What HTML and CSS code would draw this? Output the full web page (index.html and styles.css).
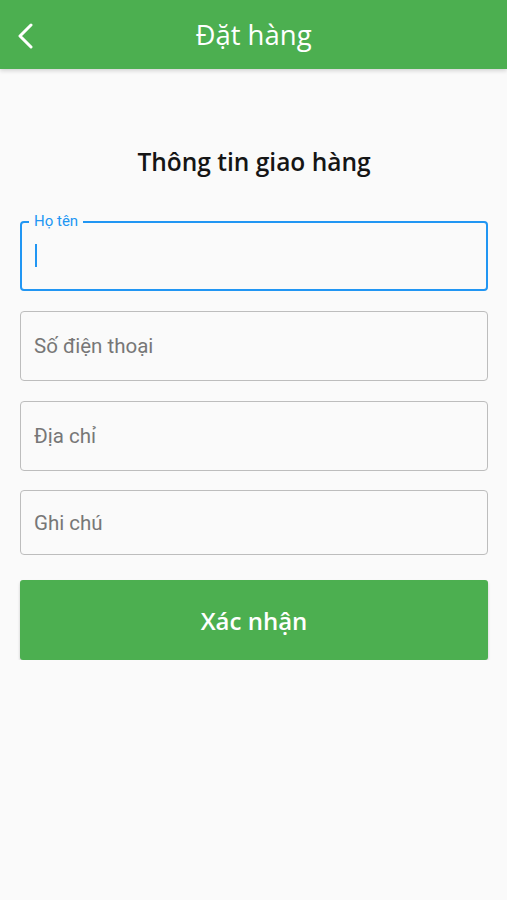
FILE: index.html
```html
<!DOCTYPE html>
<html lang="vi">
<head>
    <meta charset="UTF-8">
    <meta name="viewport" content="width=device-width, initial-scale=1.0">
    <title>Đặt hàng</title>
    <link rel="stylesheet" href="styles.css">
</head>
<body>
    <div class="app-bar">
        <button class="back-btn" aria-label="Quay lại">
            <svg width="18" height="26" viewBox="0 0 18 26">
                <polyline points="14,2 3,13 14,24" fill="none" stroke="#fff" stroke-width="3" stroke-linecap="round" stroke-linejoin="round"/>
            </svg>
        </button>
        <h1 class="app-title">Đặt hàng</h1>
    </div>

    <div class="container">
        <h2 class="heading">Thông tin giao hàng</h2>

        <form class="order-form">
            <!-- focused field -->
            <div class="field field-active">
                <span class="field-label">Họ tên</span>
                <span class="caret"></span>
            </div>
            <input class="field" type="tel" placeholder="Số điện thoại">
            <input class="field" type="text" placeholder="Địa chỉ">
            <input class="field field-note" type="text" placeholder="Ghi chú">
            <button type="button" class="submit-btn">Xác nhận</button>
        </form>
    </div>
</body>
</html>
```

FILE: styles.css
```css
body {
    font-family: 'Open Sans', 'Noto Sans', sans-serif;
    margin: 0;
    padding: 0;
    background-color: #fafafa;
    color: #111;
}
.app-bar {
    height: 69px;
    background-color: #4caf50;
    display: flex;
    align-items: center;
    justify-content: center;
    position: relative;
    box-shadow: 0 2px 4px rgba(0, 0, 0, 0.15);
}
.back-btn {
    position: absolute;
    left: 17px;
    top: 23px;
    background: none;
    border: none;
    padding: 0;
    cursor: pointer;
}
.app-title {
    margin: 0;
    color: #fff;
    font-weight: 400;
    font-size: 27.5px;
    line-height: 32px;
}
.container {
    padding: 0 19px 0 20px;
}
.heading {
    margin: 78px 0 44px;
    text-align: center;
    font-size: 24.5px;
    line-height: 30px;
    font-weight: 600;
    color: #151515;
}
.order-form {
    display: flex;
    flex-direction: column;
    gap: 20px;
}
.field {
    box-sizing: border-box;
    height: 70px;
    width: 100%;
    border: 1.5px solid #bdbdbd;
    border-radius: 4px;
    background: transparent;
    padding: 0 12px 0 13px;
    font-family: Roboto, 'Noto Sans', sans-serif;
    font-size: 20.5px;
    color: #333;
    outline: none;
}
.field::placeholder {
    color: #777;
}
.field-note {
    height: 65px;
    margin-top: -1px;
}
.field-active {
    position: relative;
    border: 2px solid #2196f3;
    display: flex;
    align-items: center;
}
.field-label {
    position: absolute;
    top: -10px;
    left: 7px;
    padding: 0 5px;
    background-color: #fafafa;
    color: #2196f3;
    font-family: Roboto, 'Noto Sans', sans-serif;
    font-size: 15px;
    line-height: 16px;
}
.caret {
    width: 2px;
    height: 23px;
    background-color: #2196f3;
    margin-top: -2px;
}
.submit-btn {
    margin-top: 5px;
    height: 80px;
    border: none;
    border-radius: 3px;
    background-color: #4caf50;
    color: #fff;
    font-family: 'Open Sans', 'Noto Sans', sans-serif;
    font-size: 24px;
    font-weight: 600;
    cursor: pointer;
    box-shadow: 0 2px 3px rgba(0, 0, 0, 0.2);
}
```
